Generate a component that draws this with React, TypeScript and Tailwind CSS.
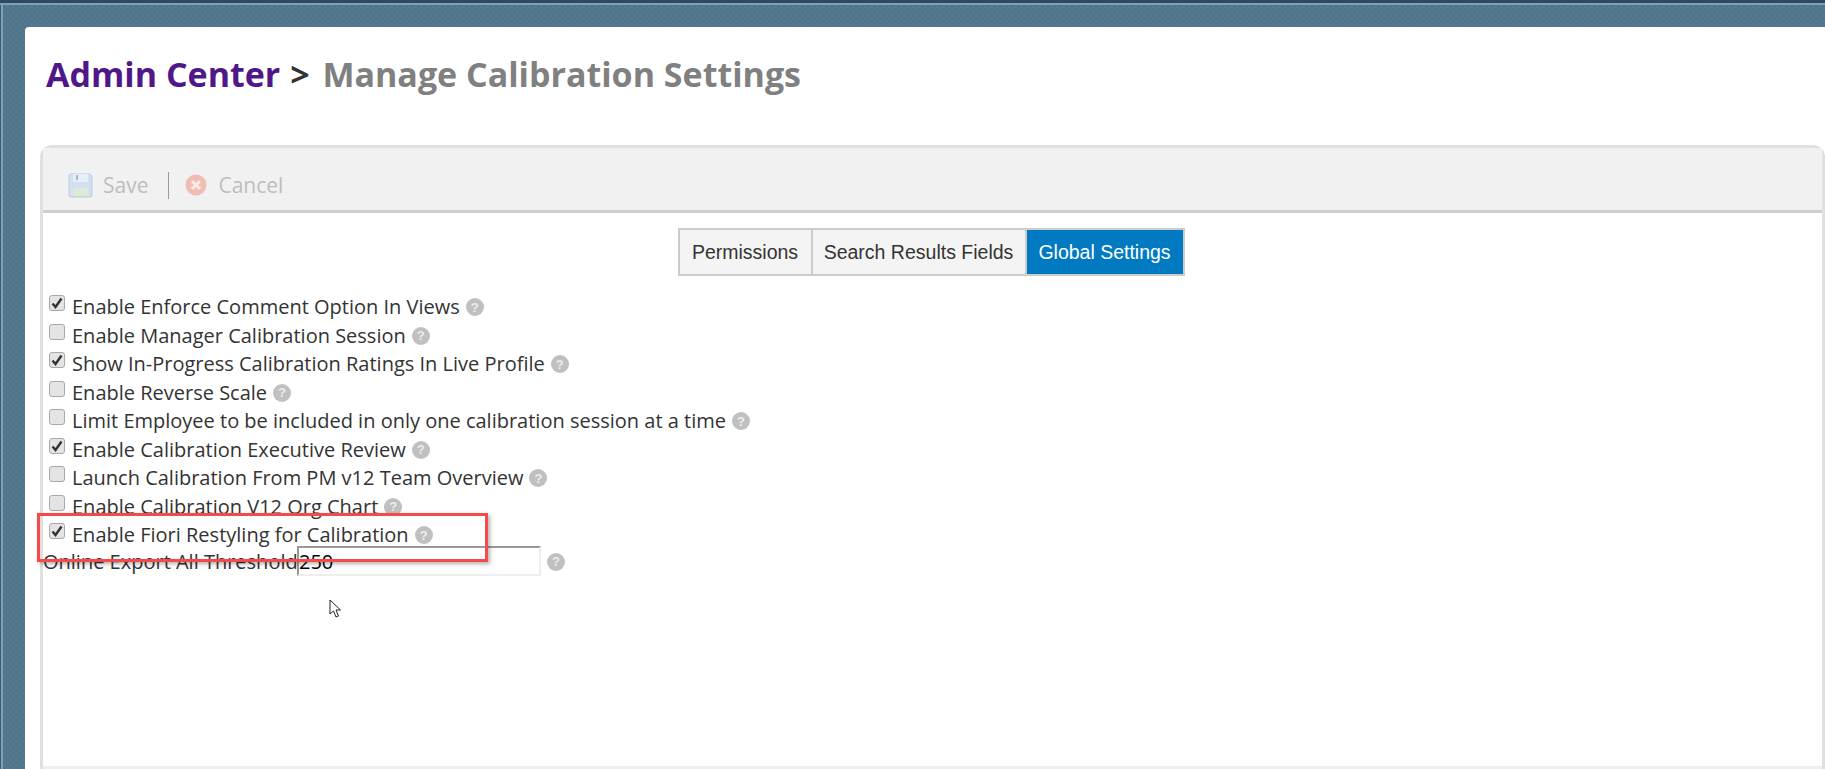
const rows: [string, boolean][] = [
  ["Enable Enforce Comment Option In Views", true],
  ["Enable Manager Calibration Session", false],
  ["Show In-Progress Calibration Ratings In Live Profile", true],
  ["Enable Reverse Scale", false],
  ["Limit Employee to be included in only one calibration session at a time", false],
  ["Enable Calibration Executive Review", true],
  ["Launch Calibration From PM v12 Team Overview", false],
  ["Enable Calibration V12 Org Chart", false],
  ["Enable Fiori Restyling for Calibration", true],
];

function Help() {
  return (
    <span className="ml-[6px] flex h-[18px] w-[18px] shrink-0 items-center justify-center rounded-full bg-[#c0c0c0] font-['Liberation_Sans',sans-serif] text-[13px] font-bold leading-none text-[#ececec]">
      ?
    </span>
  );
}

function Check({ on }: { on: boolean }) {
  return (
    <span className="mt-[-8px] mr-[7px] flex h-[16px] w-[16px] shrink-0 items-center justify-center rounded-[3px] border border-[#a8a8a8] bg-[#e4e4e4]">
      {on && (
        <svg width="12" height="12" viewBox="0 0 12 12">
          <path d="M1.5 6.5 L4.5 10 L10.5 1.5" fill="none" stroke="#333" strokeWidth="2.4" />
        </svg>
      )}
    </span>
  );
}

export default function App() {
  return (
    <div className="relative h-[769px] w-[1825px] overflow-hidden bg-[#527789] font-['Open_Sans','Noto_Sans',sans-serif] text-[20px] text-[#333]">
      <div className="h-[3px] bg-[#2f4a5e]" />
      <div className="h-[2px] bg-[#7fa0b5]" />
      <div className="border-l border-[#3c5f75]">
        <div className="flex h-[764px] border-l-2 border-[#7fa0b5] bg-[repeating-conic-gradient(#557a90_0%_25%,#50758b_0%_50%)] bg-[length:6px_6px] pl-[22px] pt-[22px]">
          <div className="flex h-[742px] w-full flex-col overflow-hidden rounded-tl-[4px] bg-white pl-[15px]">
            <h1 className="h-[118px] pl-[6px] pt-[25px] text-[34px] font-bold leading-[44px]">
              <span className="text-[#4f1787]">Admin Center</span>
              <span className="ml-[1px] mr-[4px] text-[#333]"> &gt; </span>
              <span className="text-[#808080]">Manage Calibration Settings</span>
            </h1>
            <div className="flex h-[624px] shrink-0 flex-col rounded-t-[12px] border-[3px] border-b-0 border-[#e0e0e0]">
              <div className="flex h-[65px] shrink-0 items-center border-b-[3px] border-[#cfcfcf] bg-[#f1f1f1] pl-[25px] pt-[12px] text-[21px] text-[#bdbdbd]">
                <svg width="25" height="25" viewBox="0 0 25 25">
                  <path d="M1 3a2 2 0 0 1 2-2h19l2 2v19a2 2 0 0 1-2 2H3a2 2 0 0 1-2-2z" fill="#d3e0ef" stroke="#b9cce3" />
                  <rect x="5" y="1" width="15" height="8" fill="#e8eef6" />
                  <rect x="8" y="2" width="2" height="5" fill="#9fb5d0" />
                  <rect x="5" y="15" width="15" height="8" fill="#dcebd4" />
                </svg>
                <span className="ml-[10px] pt-[2px]">Save</span>
                <span className="ml-[20px] h-[27px] w-px bg-[#9a9a9a]" />
                <svg className="ml-[16px]" width="22" height="22" viewBox="0 0 22 22">
                  <circle cx="11" cy="11" r="10.5" fill="#f0bdb5" />
                  <path d="M7 7 L15 15 M15 7 L7 15" stroke="#fbe9e6" strokeWidth="3" />
                </svg>
                <span className="ml-[11px] pt-[2px]">Cancel</span>
              </div>
              <div className="flex flex-1 flex-col border-b-[3px] border-[#eeeeee]">
                <div className="mt-[15px] flex h-[48px] justify-center font-['Liberation_Sans',sans-serif] text-[19.5px]">
                  <div className="ml-[-3px] flex border-2 border-[#cccccc] bg-[#f4f4f4]">
                    <span className="flex w-[131px] items-center justify-center pt-[2px]">Permissions</span>
                    <span className="flex w-[216px] items-center justify-center border-x-2 border-[#cccccc] pt-[2px]">Search Results Fields</span>
                    <span className="flex w-[156px] items-center justify-center bg-[#027ac1] pt-[2px] text-white">Global Settings</span>
                  </div>
                </div>
                <div className="mt-[17px] pl-[6px]">
                  {rows.map(([label, on]) => (
                    <div key={label} className="flex h-[28.5px] items-center">
                      <Check on={on} />
                      <span className="whitespace-nowrap">{label}</span>
                      <Help />
                    </div>
                  ))}
                </div>
                <div className="mt-[-4px] flex h-[30px] items-center">
                  <span className="w-[254px] shrink-0 whitespace-nowrap pt-[2px]">Online Export All Threshold</span>
                  <span className="flex h-[30px] w-[244px] shrink-0 items-center border-2 border-[#eeeeee] border-l-[#999999] border-t-[#999999] pt-[2px] text-black">250</span>
                  <span className="pt-[2px]">
                    <Help />
                  </span>
                </div>
              </div>
            </div>
          </div>
        </div>
      </div>
      <div className="absolute left-[37px] top-[513px] h-[49px] w-[451px] border-[3px] border-[#f44a4a] shadow-[2px_2px_4px_rgba(0,0,0,0.3)]" />
      <svg className="absolute left-[329px] top-[599px]" width="13" height="20" viewBox="0 0 13 20">
        <path d="M1 1 V15 L4.5 12 L7 18 L9.5 17 L7 11 H11.5 Z" fill="#fff" stroke="#222" strokeWidth="1" />
      </svg>
    </div>
  );
}
